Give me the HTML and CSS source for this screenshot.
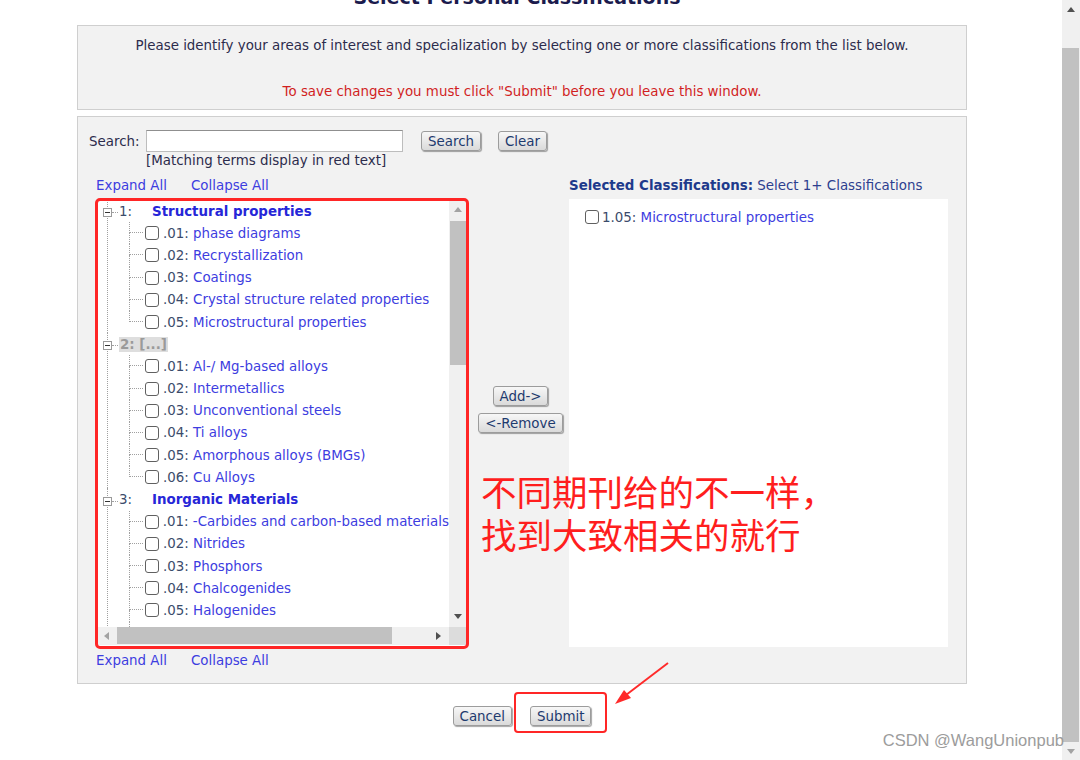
FILE: index.html
```html
<!DOCTYPE html>
<html lang="en">
<head>
    <meta charset="UTF-8">
    <title>Select Personal Classifications</title>
    <link rel="stylesheet" href="styles.css">
</head>
<body>
<div class="page">
    <div class="content">
        <div class="frame">
            <h1 class="title">Select Personal Classifications</h1>

            <div class="notice">
                <p>Please identify your areas of interest and specialization by selecting one or more classifications from the list below.</p>
                <p class="warn">To save changes you must click "Submit" before you leave this window.</p>
            </div>

            <div class="panel">
                <div class="search-row">
                    <label for="term">Search:</label>
                    <input type="text" id="term" class="search-input">
                    <button class="btn">Search</button>
                    <button class="btn">Clear</button>
                </div>
                <div class="hint">[Matching terms display in red text]</div>

                <div class="picker">
                    <div class="tree-links"><a href="#">Expand All</a><a href="#">Collapse All</a></div>
                    <div></div>
                    <div class="selected-head"><b>Selected Classifications:</b> Select 1+ Classifications</div>

                    <div class="tree-box">
                        <div class="tree">
                            <div class="section">
                                <div class="section-head"><span class="toggle"></span><span class="joint"></span><span class="num">1:</span><span class="sect-name">Structural properties</span></div>
                                <div class="leaf"><span class="elbow"></span><input type="checkbox" class="check"><span class="code">.01:</span>&nbsp;<span class="term">phase diagrams</span></div>
                                <div class="leaf"><span class="elbow"></span><input type="checkbox" class="check"><span class="code">.02:</span>&nbsp;<span class="term">Recrystallization</span></div>
                                <div class="leaf"><span class="elbow"></span><input type="checkbox" class="check"><span class="code">.03:</span>&nbsp;<span class="term">Coatings</span></div>
                                <div class="leaf"><span class="elbow"></span><input type="checkbox" class="check"><span class="code">.04:</span>&nbsp;<span class="term">Crystal structure related properties</span></div>
                                <div class="leaf"><span class="elbow"></span><input type="checkbox" class="check"><span class="code">.05:</span>&nbsp;<span class="term">Microstructural properties</span></div>
                            </div>
                            <div class="section">
                                <div class="section-head"><span class="toggle"></span><span class="joint"></span><span class="collapsed-tag">2: [...]</span></div>
                                <div class="leaf"><span class="elbow"></span><input type="checkbox" class="check"><span class="code">.01:</span>&nbsp;<span class="term">Al-/ Mg-based alloys</span></div>
                                <div class="leaf"><span class="elbow"></span><input type="checkbox" class="check"><span class="code">.02:</span>&nbsp;<span class="term">Intermetallics</span></div>
                                <div class="leaf"><span class="elbow"></span><input type="checkbox" class="check"><span class="code">.03:</span>&nbsp;<span class="term">Unconventional steels</span></div>
                                <div class="leaf"><span class="elbow"></span><input type="checkbox" class="check"><span class="code">.04:</span>&nbsp;<span class="term">Ti alloys</span></div>
                                <div class="leaf"><span class="elbow"></span><input type="checkbox" class="check"><span class="code">.05:</span>&nbsp;<span class="term">Amorphous alloys (BMGs)</span></div>
                                <div class="leaf"><span class="elbow"></span><input type="checkbox" class="check"><span class="code">.06:</span>&nbsp;<span class="term">Cu Alloys</span></div>
                            </div>
                            <div class="section">
                                <div class="section-head"><span class="toggle"></span><span class="joint"></span><span class="num">3:</span><span class="sect-name">Inorganic Materials</span></div>
                                <div class="leaf"><span class="elbow"></span><input type="checkbox" class="check"><span class="code">.01:</span>&nbsp;<span class="term">-Carbides and carbon-based materials</span></div>
                                <div class="leaf"><span class="elbow"></span><input type="checkbox" class="check"><span class="code">.02:</span>&nbsp;<span class="term">Nitrides</span></div>
                                <div class="leaf"><span class="elbow"></span><input type="checkbox" class="check"><span class="code">.03:</span>&nbsp;<span class="term">Phosphors</span></div>
                                <div class="leaf"><span class="elbow"></span><input type="checkbox" class="check"><span class="code">.04:</span>&nbsp;<span class="term">Chalcogenides</span></div>
                                <div class="leaf"><span class="elbow"></span><input type="checkbox" class="check"><span class="code">.05:</span>&nbsp;<span class="term">Halogenides</span></div>
                                <div class="leaf"><span class="elbow"></span></div>
                            </div>
                        </div>

                        <div class="vbar">
                            <span class="arrow-cell"><svg width="8" height="5" viewBox="0 0 8 5"><polygon points="0,5 4,0 8,5" fill="#a3a3a3"/></svg></span>
                            <span class="vthumb"></span>
                            <span class="arrow-cell end"><svg width="8" height="5" viewBox="0 0 8 5"><polygon points="0,0 8,0 4,5" fill="#505050"/></svg></span>
                        </div>
                        <div class="hbar">
                            <span class="arrow-cell"><svg width="5" height="8" viewBox="0 0 5 8"><polygon points="5,0 5,8 0,4" fill="#a3a3a3"/></svg></span>
                            <span class="hthumb"></span>
                            <span class="arrow-cell end"><svg width="5" height="8" viewBox="0 0 5 8"><polygon points="0,0 5,4 0,8" fill="#505050"/></svg></span>
                        </div>
                        <div class="corner"></div>
                    </div>

                    <div class="move-buttons">
                        <button class="btn">Add-&gt;</button>
                        <button class="btn">&lt;-Remove</button>
                    </div>

                    <div class="selected-box">
                        <div class="selected-item"><input type="checkbox" class="check"><span class="code">1.05:</span>&nbsp;<span class="term">Microstructural properties</span></div>
                    </div>

                    <div class="tree-links bottom"><a href="#">Expand All</a><a href="#">Collapse All</a></div>
                </div>
            </div>

            <div class="actions">
                <button class="btn">Cancel</button>
                <button class="btn">Submit</button>
            </div>
        </div>
    </div>

    <div class="page-scroll">
        <span class="arrow-cell"><svg width="8" height="5" viewBox="0 0 8 5"><polygon points="0,5 4,0 8,5" fill="#505050"/></svg></span>
        <span class="page-thumb"></span>
        <span class="arrow-cell"><svg width="8" height="5" viewBox="0 0 8 5"><polygon points="0,0 8,0 4,5" fill="#a3a3a3"/></svg></span>
    </div>

    <!-- annotations drawn over the screenshot -->
    <div class="note">不同期刊给的不一样，<br>找到大致相关的就行</div>
    <div class="submit-mark"></div>
    <svg class="pointer" width="60" height="50" viewBox="0 0 60 50">
        <line x1="56" y1="3" x2="14" y2="35" stroke="#ff2a2a" stroke-width="2"/>
        <polygon points="3,44 12,30 19,38" fill="#ff2a2a"/>
    </svg>
    <div class="watermark">CSDN @WangUnionpub</div>
</div>
</body>
</html>
```

FILE: styles.css
```css
body {
    margin: 0;
    background: #fff;
    font-family: "DejaVu Sans", Verdana, sans-serif;
    font-size: 13.4px;
    color: #2c2c4c;
    overflow: hidden;
}

.page {
    position: relative;
    display: flex;
    height: 760px;
}

.content {
    width: 1062px;
}

.frame {
    width: 890px;
    margin-left: 77px;
}

.title {
    margin: -15px 10px 16px 0;
    font-size: 19px;
    line-height: 24px;
    text-align: center;
    color: #1b1b4d;
}

.notice {
    background: #f2f2f2;
    border: 1px solid #cfcfcf;
    padding: 12px 0 9px;
    text-align: center;
}

.notice p {
    margin: 0;
    line-height: 16px;
}

.notice .warn {
    margin-top: 30px;
    color: #d11f1f;
}

.panel {
    margin-top: 6px;
    background: #f2f2f2;
    border: 1px solid #cfcfcf;
    padding: 13px 18px 14px 11px;
}

.search-row {
    display: flex;
    align-items: center;
    height: 22px;
}

.search-row label {
    width: 57px;
}

.search-input {
    box-sizing: border-box;
    width: 257px;
    height: 22px;
    margin: 0 18px 0 0;
    border: 1px solid #bdbdbd;
    border-top-color: #8f8f8f;
    background: #fff;
}

.search-row .btn + .btn {
    margin-left: 17px;
}

.btn {
    box-sizing: border-box;
    height: 20px;
    padding: 0 6px;
    font-family: "DejaVu Sans", Verdana, sans-serif;
    font-size: 13.4px;
    line-height: 17px;
    color: #1d3a6e;
    background: linear-gradient(#f7f7f7, #dadada);
    border: 1px solid #9c9c9c;
    border-radius: 3px;
    box-shadow: 1px 1px 1px rgba(0, 0, 0, 0.35);
}

.hint {
    margin: 1px 0 0 57px;
    line-height: 16px;
}

.picker {
    display: grid;
    grid-template-columns: 372px 101px 379px;
    margin: 9px 0 0 7px;
}

.tree-links {
    display: flex;
    gap: 24px;
    line-height: 16px;
}

.tree-links a {
    color: #3d3de0;
    text-decoration: none;
}

.tree-links.bottom {
    margin-top: 6px;
}

.selected-head {
    line-height: 16px;
    color: #2d3f8f;
}

.selected-head b {
    color: #1e3a8c;
}

.tree-box {
    display: grid;
    grid-template-columns: 352px 18px;
    grid-template-rows: 427px 18px;
    width: 370px;
    margin: 6px 0 0 1px;
    background: #fff;
    outline: 3px solid #ff2626;
    outline-offset: -1px;
    border-radius: 3px;
}

.tree {
    overflow: hidden;
    white-space: nowrap;
}

.section {
    margin-left: 10px;
    border-left: 1px dotted #a0a0a0;
}

.section-head {
    display: flex;
    align-items: center;
    height: 22.2px;
}

.toggle {
    box-sizing: border-box;
    width: 9px;
    height: 9px;
    margin: 3px 0 0 -5px;
    border: 1px solid #9a9a9a;
    background: linear-gradient(#333, #333) center / 5px 1px no-repeat, #fff;
}

.joint {
    width: 6px;
    margin: 3px 1px 0 0;
    border-bottom: 1px dotted #a0a0a0;
}

.num {
    display: inline-block;
    width: 33px;
    color: #3b4b6b;
}

.sect-name {
    font-weight: bold;
    color: #2626d8;
}

.collapsed-tag {
    font-weight: bold;
    color: #9a9a9a;
    background: #dedede;
    padding: 0 1px;
}

.leaf {
    display: flex;
    align-items: center;
    height: 22.2px;
    margin-left: 21px;
}

.elbow {
    align-self: stretch;
    display: flex;
    flex-direction: column;
    width: 14px;
}

.elbow::before {
    content: "";
    box-sizing: border-box;
    height: 50%;
    border-left: 1px dotted #a0a0a0;
    border-bottom: 1px dotted #a0a0a0;
}

.elbow::after {
    content: "";
    flex: 1;
    border-left: 1px dotted #a0a0a0;
}

.leaf:last-child .elbow::after {
    border-left-color: transparent;
}

.check {
    appearance: none;
    box-sizing: border-box;
    width: 14px;
    height: 14px;
    margin: 0 4px 0 2px;
    border: 1px solid #606060;
    border-radius: 3px;
    background: #fff;
}

.code {
    color: #3b4b6b;
}

.term {
    color: #3d3de0;
}

.vbar, .hbar, .page-scroll {
    display: flex;
    background: #f0f0f0;
}

.vbar {
    flex-direction: column;
}

.arrow-cell {
    display: flex;
    align-items: center;
    justify-content: center;
    width: 18px;
    height: 18px;
    flex: none;
}

.vthumb {
    height: 144px;
    margin: 3px 1px 0;
    background: #c1c1c1;
}

.vbar .end {
    margin-top: auto;
    margin-bottom: 2px;
}

.hthumb {
    width: 275px;
    margin: 0 0 1px 2px;
    background: #c1c1c1;
}

.hbar .end {
    margin-left: auto;
    margin-right: 2px;
}

.corner {
    background: #dcdcdc;
}

.move-buttons {
    display: flex;
    flex-direction: column;
    align-items: center;
    gap: 7px;
    padding: 192px 0 0 4px;
}

.selected-box {
    height: 448px;
    box-sizing: border-box;
    margin-top: 5px;
    padding: 10px 16px;
    background: #fff;
}

.selected-item {
    display: flex;
    align-items: center;
    height: 16px;
}

.selected-item .check {
    margin: 0 3px 0 0;
}

.actions {
    display: flex;
    justify-content: center;
    gap: 18px;
    margin-top: 22px;
}

.page-scroll {
    flex-direction: column;
    width: 18px;
}

.page-thumb {
    flex: 1;
    margin: 30px 1px 0 0;
    background: #c1c1c1;
}

.note {
    position: absolute;
    left: 481px;
    top: 469px;
    font-family: "Noto Sans CJK SC", sans-serif;
    font-size: 35.5px;
    line-height: 43px;
    color: #ff1e1e;
}

.submit-mark {
    position: absolute;
    left: 514px;
    top: 692px;
    width: 93px;
    height: 41px;
    box-sizing: border-box;
    border: 2.5px solid #ff2626;
    border-radius: 4px;
}

.pointer {
    position: absolute;
    left: 612px;
    top: 660px;
}

.watermark {
    position: absolute;
    right: 16px;
    top: 731px;
    font-family: "Liberation Sans", Arial, sans-serif;
    font-size: 16.5px;
    color: #9c9c9c;
}
```
